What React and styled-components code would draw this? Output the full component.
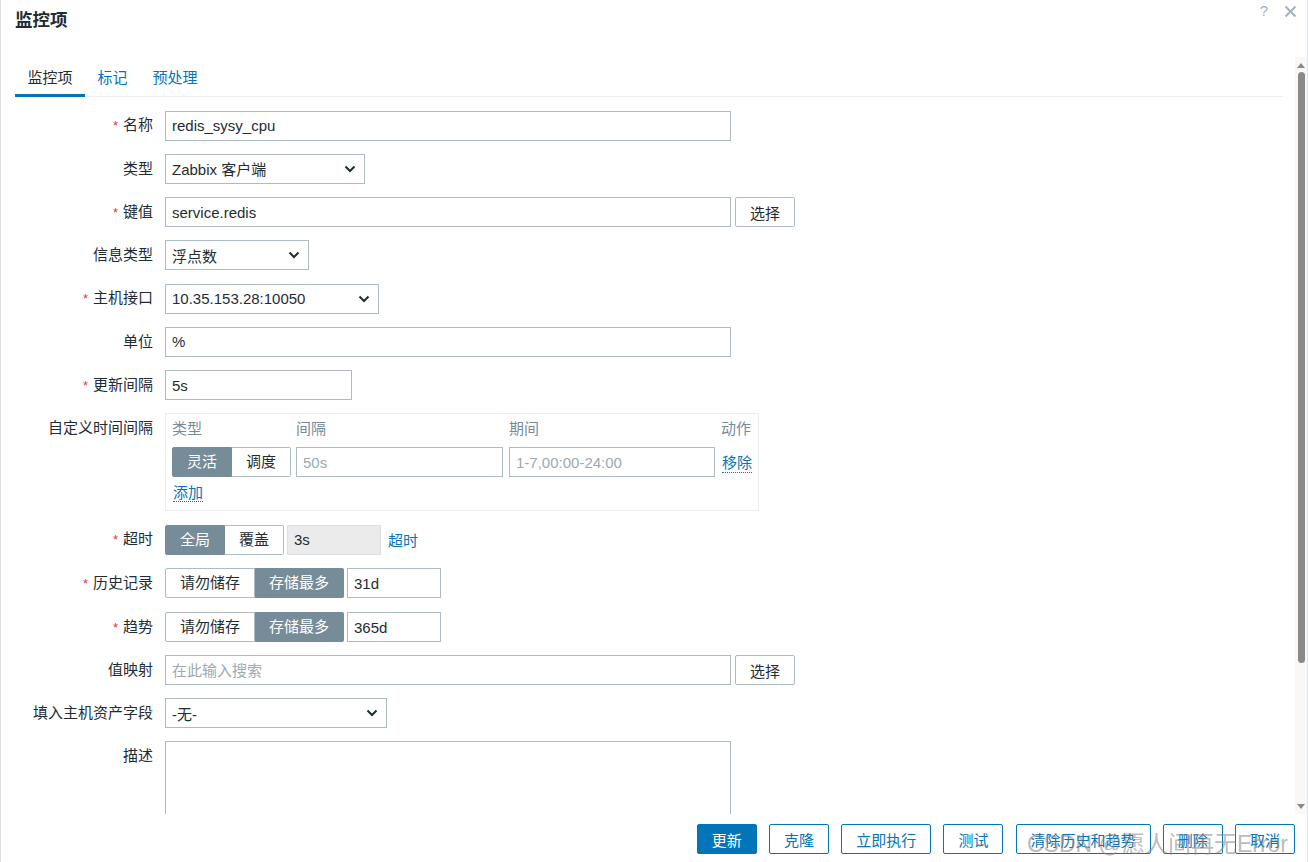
import React from "react";
import styled, { createGlobalStyle } from "styled-components";

const GlobalStyle = createGlobalStyle`
  html, body {
    margin: 0;
    padding: 0;
    background: #ffffff;
  }
  body {
    font-family: "Liberation Sans", "Noto Sans CJK SC", sans-serif;
    font-size: 15px;
    color: #1f2c33;
  }
  * {
    box-sizing: border-box;
  }
`;

const Chevron = () => (
  <svg width="12" height="8" viewBox="0 0 12 8">
    <path d="M1.5 1.5 L6 6 L10.5 1.5" stroke="#1f2c33" strokeWidth="2" fill="none" />
  </svg>
);

const CloseX = () => (
  <svg width="13" height="13" viewBox="0 0 13 13">
    <path d="M1.5 1.5 L11.5 11.5 M11.5 1.5 L1.5 11.5" stroke="#a6b2ba" strokeWidth="2" fill="none" />
  </svg>
);

function App() {
  return (
    <>
      <GlobalStyle />
      <Dialog>
        <Header>
          <Title>监控项</Title>
          <HeaderIcons>
            <Help>?</Help>
            <CloseX />
          </HeaderIcons>
        </Header>

        <Main>
          <Content>
            <TabList>
              <Tab $active>监控项</Tab>
              <Tab>标记</Tab>
              <Tab>预处理</Tab>
            </TabList>

            <Form>
              <Label><Req>*</Req>名称</Label>
              <Field>
                <TextInput $w={566} defaultValue="redis_sysy_cpu" />
              </Field>

              <Label>类型</Label>
              <Field>
                <SelectBox $w={200}>Zabbix 客户端<Chevron /></SelectBox>
              </Field>

              <Label><Req>*</Req>键值</Label>
              <Field $gap={4}>
                <TextInput $w={566} defaultValue="service.redis" />
                <PlainButton>选择</PlainButton>
              </Field>

              <Label>信息类型</Label>
              <Field>
                <SelectBox $w={144}>浮点数<Chevron /></SelectBox>
              </Field>

              <Label><Req>*</Req>主机接口</Label>
              <Field>
                <SelectBox $w={214}>10.35.153.28:10050<Chevron /></SelectBox>
              </Field>

              <Label>单位</Label>
              <Field>
                <TextInput $w={566} defaultValue="%" />
              </Field>

              <Label><Req>*</Req>更新间隔</Label>
              <Field>
                <TextInput $w={187} defaultValue="5s" />
              </Field>

              <Label>自定义时间间隔</Label>
              <Field>
                <IntervalBox>
                  <IntervalGrid>
                    <ColHead>类型</ColHead>
                    <ColHead>间隔</ColHead>
                    <ColHead>期间</ColHead>
                    <ColHead>动作</ColHead>
                    <Seg>
                      <SegButton $active>灵活</SegButton>
                      <SegButton>调度</SegButton>
                    </Seg>
                    <TextInput placeholder="50s" />
                    <TextInput placeholder="1-7,00:00-24:00" />
                    <Link $dotted>移除</Link>
                  </IntervalGrid>
                  <AddRow>
                    <Link $dotted>添加</Link>
                  </AddRow>
                </IntervalBox>
              </Field>

              <Label><Req>*</Req>超时</Label>
              <Field $gap={3}>
                <Seg>
                  <SegButton $active>全局</SegButton>
                  <SegButton>覆盖</SegButton>
                </Seg>
                <TextInput $w={94} $disabled defaultValue="3s" readOnly />
                <TimeoutLink>超时</TimeoutLink>
              </Field>

              <Label><Req>*</Req>历史记录</Label>
              <Field $gap={3}>
                <Seg>
                  <SegButton>请勿储存</SegButton>
                  <SegButton $active>存储最多</SegButton>
                </Seg>
                <TextInput $w={94} defaultValue="31d" />
              </Field>

              <Label><Req>*</Req>趋势</Label>
              <Field $gap={3}>
                <Seg>
                  <SegButton>请勿储存</SegButton>
                  <SegButton $active>存储最多</SegButton>
                </Seg>
                <TextInput $w={94} defaultValue="365d" />
              </Field>

              <Label>值映射</Label>
              <Field $gap={4}>
                <TextInput $w={566} placeholder="在此输入搜索" />
                <PlainButton>选择</PlainButton>
              </Field>

              <Label>填入主机资产字段</Label>
              <Field>
                <SelectBox $w={222}>-无-<Chevron /></SelectBox>
              </Field>

              <Label>描述</Label>
              <Field>
                <TextArea />
              </Field>
            </Form>
          </Content>

          <ScrollBar>
            <ArrowUp />
            <Thumb />
            <Spacer />
            <ArrowDown />
          </ScrollBar>
        </Main>

        <Footer>
          <Button $primary>更新</Button>
          <Button>克隆</Button>
          <Button>立即执行</Button>
          <Button>测试</Button>
          <Button>清除历史和趋势</Button>
          <Button>删除</Button>
          <Button>取消</Button>
        </Footer>

        <Watermark>CSDN @愿人间再无Error</Watermark>
      </Dialog>
    </>
  );
}

const Dialog = styled.div`
  position: relative;
  width: 1308px;
  height: 862px;
  display: flex;
  flex-direction: column;
  background: #ffffff;
  border-left: 1px solid #d8dde0;
  border-right: 1px solid #e3e6e8;
  overflow: hidden;
`;

const Header = styled.div`
  height: 42px;
  flex: none;
  display: flex;
  justify-content: space-between;
  align-items: flex-start;
  padding: 0 10px 0 14px;
`;

const Title = styled.div`
  font-size: 17.5px;
  font-weight: bold;
  line-height: 20px;
  margin-top: 10px;
  color: #1f2c33;
`;

const HeaderIcons = styled.div`
  display: flex;
  align-items: center;
  gap: 16px;
  margin-top: 3px;
`;

const Help = styled.span`
  font-size: 15px;
  color: #a6b2ba;
  line-height: 16px;
`;

const Main = styled.div`
  flex: 1;
  min-height: 0;
  display: flex;
`;

const Content = styled.div`
  flex: 1;
  min-width: 0;
  padding: 22px 12px 0 14px;
  overflow: hidden;
`;

const TabList = styled.div`
  display: flex;
  border-bottom: 1px solid #ebeef0;
`;

const Tab = styled.div`
  padding: 5px 12.5px 7px;
  line-height: 18px;
  font-size: 15px;
  color: ${(p) => (p.$active ? "#1f2c33" : "#0275b8")};
  border-bottom: 3px solid ${(p) => (p.$active ? "#0275b8" : "transparent")};
  margin-bottom: -1px;
`;

const Form = styled.div`
  display: grid;
  grid-template-columns: 138px 1fr;
  column-gap: 12px;
  row-gap: 12.75px;
  padding-top: 13px;
`;

const Label = styled.div`
  text-align: right;
  line-height: 30px;
  white-space: nowrap;
  color: #1f2c33;
`;

const Req = styled.span`
  color: #e33734;
  font-size: 13px;
  margin-right: 5px;
`;

const Field = styled.div`
  display: flex;
  align-items: center;
  gap: ${(p) => p.$gap || 0}px;
  min-width: 0;
`;

const TextInput = styled.input`
  width: ${(p) => (p.$w ? `${p.$w}px` : "100%")};
  height: 30px;
  border: 1px solid ${(p) => (p.$disabled ? "#dcdfe1" : "#acbbc4")};
  background: ${(p) => (p.$disabled ? "#ebebeb" : "#ffffff")};
  padding: 0 6px;
  font-family: inherit;
  font-size: 15px;
  color: #1f2c33;
  outline: none;
  border-radius: 0;

  &::placeholder {
    color: #9ea9b0;
  }
`;

const SelectBox = styled.div`
  width: ${(p) => p.$w}px;
  height: 30px;
  border: 1px solid #acbbc4;
  background: #ffffff;
  display: flex;
  align-items: center;
  justify-content: space-between;
  padding: 0 8px 0 6px;
  font-size: 15px;
  color: #1f2c33;
  white-space: nowrap;
`;

const PlainButton = styled.button`
  height: 30px;
  padding: 0 14px;
  border: 1px solid #acbbc4;
  border-radius: 2px;
  background: #ffffff;
  font-family: inherit;
  font-size: 15px;
  color: #1f2c33;
`;

const IntervalBox = styled.div`
  width: 594px;
  border: 1px solid #ebeef0;
  padding: 3px 6px 7px;
`;

const IntervalGrid = styled.div`
  display: grid;
  grid-template-columns: 118px 207px 206px auto;
  grid-template-rows: 24px 30px;
  column-gap: 6px;
  row-gap: 6px;
  align-items: center;
`;

const ColHead = styled.div`
  color: #768d99;
  line-height: 24px;
  font-size: 15px;
`;

const AddRow = styled.div`
  margin-top: 6px;
  line-height: 20px;
`;

const Link = styled.span`
  color: #0275b8;
  font-size: 15px;
  border-bottom: ${(p) => (p.$dotted ? "1px dotted #0275b8" : "none")};
  justify-self: start;
  margin-left: ${(p) => (p.$dotted ? "1px" : "0")};
`;

const TimeoutLink = styled(Link)`
  margin-left: 4px;
`;

const Seg = styled.div`
  display: inline-flex;
  height: 30px;
`;

const SegButton = styled.div`
  height: 30px;
  line-height: 28px;
  padding: 0 14px;
  font-size: 15px;
  white-space: nowrap;
  border: 1px solid ${(p) => (p.$active ? "#768d99" : "#acbbc4")};
  background: ${(p) => (p.$active ? "#768d99" : "#ffffff")};
  color: ${(p) => (p.$active ? "#ffffff" : "#1f2c33")};

  &:first-child {
    border-radius: 2px 0 0 2px;
  }
  &:last-child {
    border-radius: 0 2px 2px 0;
    border-left: none;
  }
`;

const TextArea = styled.textarea`
  width: 566px;
  height: 110px;
  border: 1px solid #acbbc4;
  resize: none;
  font-family: inherit;
  font-size: 15px;
  outline: none;
  border-radius: 0;
`;

const ScrollBar = styled.div`
  width: 12px;
  flex: none;
  margin-top: 15px;
  background: #f8f8f8;
  display: flex;
  flex-direction: column;
  align-items: center;
  padding: 6px 0 5px;
`;

const ArrowUp = styled.div`
  width: 0;
  height: 0;
  border-left: 4px solid transparent;
  border-right: 4px solid transparent;
  border-bottom: 5px solid #8a8a8a;
`;

const ArrowDown = styled.div`
  width: 0;
  height: 0;
  border-left: 4px solid transparent;
  border-right: 4px solid transparent;
  border-top: 5px solid #8a8a8a;
`;

const Thumb = styled.div`
  width: 7px;
  height: 591px;
  margin-top: 4px;
  border-radius: 4px;
  background: #8a8a8a;
`;

const Spacer = styled.div`
  flex: 1;
`;

const Footer = styled.div`
  height: 48px;
  flex: none;
  display: flex;
  justify-content: flex-end;
  align-items: flex-start;
  gap: 12.2px;
  padding: 10px 12px 0 0;
`;

const Button = styled.button`
  height: 30px;
  padding: 0 14px;
  border: 1px solid #0275b8;
  border-radius: 2px;
  background: ${(p) => (p.$primary ? "#0275b8" : "#ffffff")};
  color: ${(p) => (p.$primary ? "#ffffff" : "#0275b8")};
  font-family: inherit;
  font-size: 15px;
  white-space: nowrap;
`;

const Watermark = styled.div`
  position: absolute;
  left: 1026px;
  bottom: 4px;
  font-size: 23px;
  line-height: 28px;
  white-space: nowrap;
  color: rgba(130, 130, 130, 0.55);
  pointer-events: none;
`;

export default App;
